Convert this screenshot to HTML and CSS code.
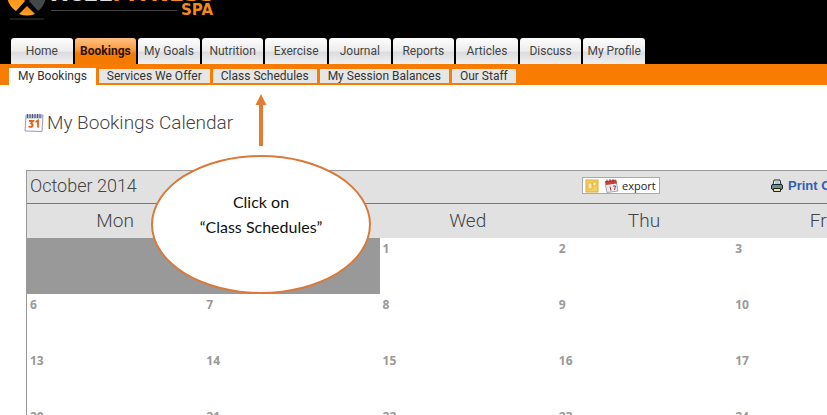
FILE: index.html
```html
<!DOCTYPE html>
<html lang="en">
<head>
  <meta charset="UTF-8">
  <meta name="viewport" content="width=device-width, initial-scale=1.0">
  <title>My Bookings Calendar</title>
  <link rel="stylesheet" href="styles.css">
</head>
<body>
  <header class="site-header">
    <div class="brand">
      <svg class="brand-mark" width="44" height="60" viewBox="0 0 44 60" aria-hidden="true">
        <defs>
          <linearGradient id="flame" x1="0" y1="0" x2="0" y2="1">
            <stop offset="0" stop-color="#f47b00"/>
            <stop offset="1" stop-color="#ffa92e"/>
          </linearGradient>
        </defs>
        <path d="M1 34Q1 45 10 51L19 41L8 26Q2 30 1 34Z" fill="url(#flame)"/>
        <path d="M40 34Q40 45 32 51L23 41L34 26Q39 30 40 34Z" fill="#43484b"/>
        <path d="M21 46L29 54Q21 57 13 54Z" fill="url(#flame)"/>
        <path d="M4 59H38" stroke="#3a3a3a" stroke-width="1"/>
      </svg>
      <div class="brand-text">
        <div class="brand-name">XCEL<span>FITNESS</span></div>
        <div class="brand-sub"><i></i><span>SPA</span></div>
      </div>
    </div>
  </header>

  <nav class="main-nav">
    <div class="tabs">
      <a href="#">Home</a>
      <a href="#" class="active">Bookings</a>
      <a href="#">My Goals</a>
      <a href="#">Nutrition</a>
      <a href="#">Exercise</a>
      <a href="#">Journal</a>
      <a href="#">Reports</a>
      <a href="#">Articles</a>
      <a href="#">Discuss</a>
      <a href="#">My Profile</a>
    </div>
  </nav>

  <nav class="sub-nav">
    <a href="#" class="active">My Bookings</a>
    <a href="#">Services We Offer</a>
    <a href="#">Class Schedules</a>
    <a href="#">My Session Balances</a>
    <a href="#">Our Staff</a>
  </nav>

  <main>
    <h1>
      <svg width="20" height="20" viewBox="0 0 20 20" aria-hidden="true">
        <path d="M2 2H19L18 18.500L1 18Z" fill="#fafaff" stroke="#9a98cf"/>
        <path d="M2 2H19V5.500H2Z" fill="#aeb6cc"/>
        <path d="M3.500 1V5M6 1V5M8.500 1V5M11 1V5M13.500 1V5M16 1V5" stroke="#4d5878"/>
        <path d="M5 8H9L7 10.500Q9 11 8.500 13Q7 14.500 4.500 13.500M11.500 9L14 7.500V14.500" fill="none" stroke="#e0631a" stroke-width="1.800"/>
      </svg>
      My Bookings Calendar
    </h1>

    <section class="calendar">
      <div class="calendar-bar">
        <h2>October 2014</h2>
        <button type="button" class="export">
          <svg width="34" height="14" viewBox="0 0 34 14" aria-hidden="true">
            <rect x="1" y="1" width="12" height="12" fill="#f3cf62" stroke="#dcae3c"/>
            <path d="M3 4H7V10H3ZM8 3H11V7H8Z" fill="#fbe9a8" stroke="#e0a92f" stroke-width=".7"/>
            <path d="M20 3L31 1L33 12L22 13.500Z" fill="#e9edf3" stroke="#8b93a0" stroke-width=".8"/>
            <path d="M20 2L31 .8L32 4.500L21 6Z" fill="#c8453d"/>
            <path d="M22 .5V3.500M25 0V3M28 0V3" stroke="#7b2525" stroke-width=".8"/>
            <path d="M25 7.500L26 11.500M28 7H30.500L29.500 11" fill="none" stroke="#b5342d"/>
          </svg>
          export
        </button>
        <a href="#" class="print">
          <svg width="12" height="14" viewBox="0 0 12 14" aria-hidden="true">
            <path d="M3 1H9L10 6H2Z" fill="#fff" stroke="#222"/>
            <path d="M4 3H8.500M4 5H9" stroke="#4da3c4"/>
            <rect x=".5" y="5.500" width="11" height="5" rx="1.500" fill="#6f8c94" stroke="#1a1f24"/>
            <path d="M2.500 9.500H9.500V12.500H2.500Z" fill="#e8e3a0" stroke="#222"/>
          </svg>
          Print Calendar
        </a>
      </div>
      <table>
        <thead>
          <tr><th>Mon</th><th>Tue</th><th>Wed</th><th>Thu</th><th>Fri</th><th>Sat</th><th>Sun</th></tr>
        </thead>
        <tbody>
          <tr><td class="empty"></td><td class="empty"></td><td>1</td><td>2</td><td>3</td><td>4</td><td>5</td></tr>
          <tr><td>6</td><td>7</td><td>8</td><td>9</td><td>10</td><td>11</td><td>12</td></tr>
          <tr><td>13</td><td>14</td><td>15</td><td>16</td><td>17</td><td>18</td><td>19</td></tr>
          <tr><td>20</td><td>21</td><td>22</td><td>23</td><td>24</td><td>25</td><td>26</td></tr>
        </tbody>
      </table>
    </section>
  </main>

  <div class="callout">
    <svg width="12" height="52" viewBox="0 0 12 52" aria-hidden="true">
      <path d="M6 0L11.500 11H8V52H4V11H.5Z" fill="#e37b32"/>
    </svg>
    <p>Click on<br>“Class Schedules”</p>
  </div>
</body>
</html>
```

FILE: styles.css
```css
* {
  box-sizing: border-box;
}
body {
  margin: 0;
  height: 100vh;
  overflow: hidden;
  position: relative;
  background: #fff;
  color: #444;
  font-family: Roboto, "Liberation Sans", sans-serif;
}
a {
  color: inherit;
  text-decoration: none;
}

/* header */
.site-header {
  display: flex;
  align-items: flex-end;
  height: 38px;
  padding: 0 6px 18px;
  background: #000;
  overflow: hidden;
}
.brand {
  display: flex;
  align-items: flex-end;
}
.brand-mark {
  flex: none;
}
.brand-text {
  width: 162px;
  margin-left: 1px;
  padding-bottom: 4px;
}
.brand-name {
  color: #ddd;
  font: bold 22px/20px "DejaVu Sans", sans-serif;
}
.brand-name span,
.brand-sub {
  color: #f08a1c;
}
.brand-sub {
  display: flex;
  align-items: center;
  gap: 4px;
  font: bold 15px/12px "DejaVu Sans", sans-serif;
}
.brand-sub i {
  flex: 1;
  height: 1px;
  background: #444;
}

/* tabs */
.main-nav {
  padding-left: 11px;
  background: #000;
}
.tabs {
  display: grid;
  grid-template-columns: repeat(10, 1fr);
  gap: 2px;
  max-width: 634px;
}
.tabs a {
  border-radius: 3px 3px 0 0;
  background: linear-gradient(#fdfdfd, #ececec 50%, #dcdcdf 55%, #f0f0f0);
  font-size: 12px;
  line-height: 26px;
  text-align: center;
  white-space: nowrap;
}
.tabs .active {
  background: linear-gradient(#ffc184, #fb9a40 45%, #f57a02 60%);
  color: #2b1200;
  font-weight: bold;
}
.sub-nav {
  display: flex;
  align-items: flex-end;
  gap: 3px;
  height: 21px;
  padding: 0 9px;
  background: #f87b02;
}
.sub-nav a {
  padding: 0 8px;
  margin-bottom: 2px;
  background: #e6e6e6;
  color: #333;
  font-size: 12px;
  line-height: 14px;
  white-space: nowrap;
}
.sub-nav .active {
  margin: 0;
  padding: 0 9px;
  background: #fff;
  line-height: 17px;
}

/* calendar */
main {
  padding: 26px 0 0 26px;
}
h1 {
  display: flex;
  align-items: center;
  gap: 3px;
  margin: 0 0 35px -2px;
  font-size: 19px;
  font-weight: 300;
  line-height: 24px;
}
.calendar {
  min-width: 1236px;
  border: 1px solid #999;
}
.calendar-bar {
  display: grid;
  grid-template-columns: 555px 189px auto;
  align-items: center;
  height: 33px;
  padding-bottom: 3px;
  background: #e1e1e1;
  border-bottom: 1px solid #777;
}
h2 {
  margin: 0;
  padding-left: 3px;
  font-size: 18px;
  font-weight: 300;
}
.export {
  display: flex;
  align-items: center;
  gap: 3px;
  justify-self: start;
  width: 78px;
  height: 17px;
  padding: 0 2px;
  border: 1px solid #aaa;
  background: #fff;
  color: #222;
  font: 11px/12px "Open Sans", sans-serif;
}
.print {
  display: flex;
  align-items: center;
  gap: 5px;
  color: #2f5fb3;
  font: bold 13px "Liberation Sans", sans-serif;
}
table {
  width: 100%;
  table-layout: fixed;
  border-collapse: collapse;
}
th {
  height: 34px;
  padding: 0 0 2px;
  background: #e1e1e1;
  font-size: 19px;
  font-weight: 300;
}
td {
  height: 56px;
  padding: 3px;
  vertical-align: top;
  color: #999;
  font: bold 12px/16px "Open Sans", sans-serif;
}
.empty {
  background: #999;
}

/* callout over the page */
.callout {
  position: absolute;
  top: 94px;
  left: 151px;
  width: 220px;
  text-align: center;
}
.callout svg {
  display: block;
  margin: 0 auto 9px;
}
.callout p {
  height: 139px;
  margin: 0;
  padding-top: 32px;
  border: 2px solid #d9793a;
  border-radius: 50%;
  background: #fff;
  color: #111;
  font: 16px/25px Lato, sans-serif;
}
```
